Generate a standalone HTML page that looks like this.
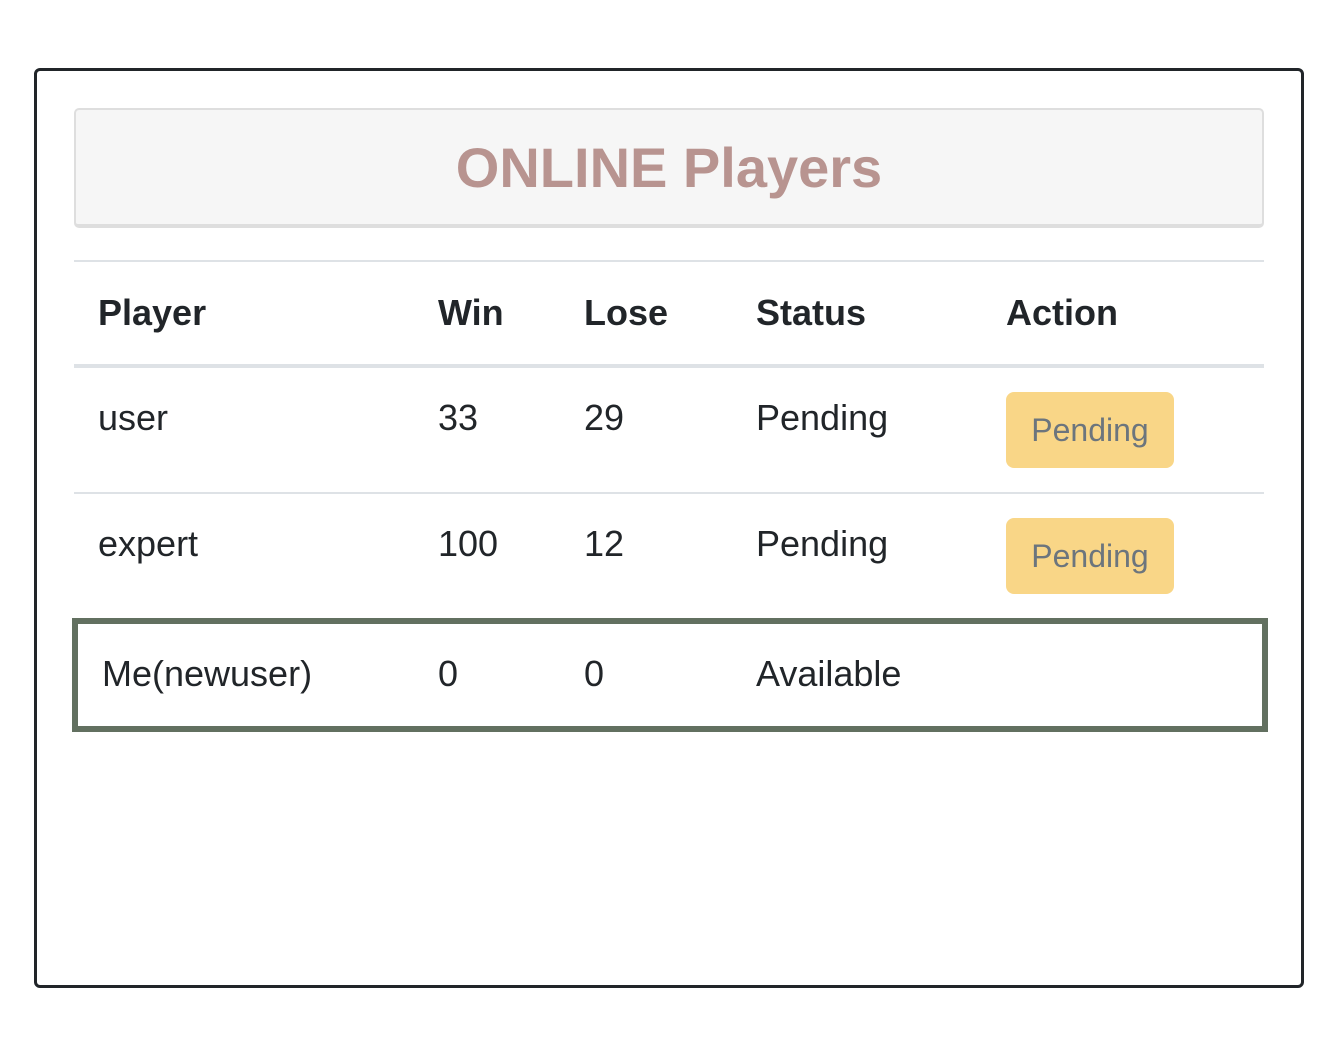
<!DOCTYPE html>
<html><head><style>
body{margin:0;width:1344px;height:1064px;background:#fff;font-family:"Liberation Sans",Arial,sans-serif;color:#212529;position:relative;overflow:hidden}
.a{position:absolute;white-space:nowrap;line-height:36px;font-size:36px}
.b{font-weight:bold}
.btn{position:absolute;left:1006px;width:168px;height:76px;background:#f9d687;border-radius:8px;color:#6c757d;font-size:32px;display:flex;align-items:center;justify-content:center}
.ln{position:absolute;left:74px;width:1190px;background:#dee2e6}
</style></head><body>
<div style="position:absolute;left:34px;top:68px;width:1264px;height:914px;border:3px solid #212529;border-radius:6px"></div>
<div style="position:absolute;left:74px;top:108px;width:1186px;height:114px;background:#f6f6f6;border:2px solid #dedede;border-bottom-width:4px;border-radius:5px"></div>
<div class="a b" style="left:0;width:1338px;text-align:center;top:140px;font-size:56px;line-height:56px;color:#b89490">ONLINE Players</div>
<div class="ln" style="top:260px;height:2px"></div>
<div class="a b" style="left:98px;top:295px">Player</div>
<div class="a b" style="left:438px;top:295px">Win</div>
<div class="a b" style="left:584px;top:295px">Lose</div>
<div class="a b" style="left:756px;top:295px">Status</div>
<div class="a b" style="left:1006px;top:295px">Action</div>
<div class="ln" style="top:364px;height:4px"></div>
<div class="a" style="left:98px;top:400px">user</div>
<div class="a" style="left:438px;top:400px">33</div>
<div class="a" style="left:584px;top:400px">29</div>
<div class="a" style="left:756px;top:400px">Pending</div>
<div class="btn" style="top:392px">Pending</div>
<div class="ln" style="top:492px;height:2px"></div>
<div class="a" style="left:98px;top:526px">expert</div>
<div class="a" style="left:438px;top:526px">100</div>
<div class="a" style="left:584px;top:526px">12</div>
<div class="a" style="left:756px;top:526px">Pending</div>
<div class="btn" style="top:518px">Pending</div>
<div style="position:absolute;left:72px;top:618px;width:1184px;height:102px;border:6px solid #627060"></div>
<div class="a" style="left:102px;top:656px">Me(newuser)</div>
<div class="a" style="left:438px;top:656px">0</div>
<div class="a" style="left:584px;top:656px">0</div>
<div class="a" style="left:756px;top:656px">Available</div>
</body></html>
